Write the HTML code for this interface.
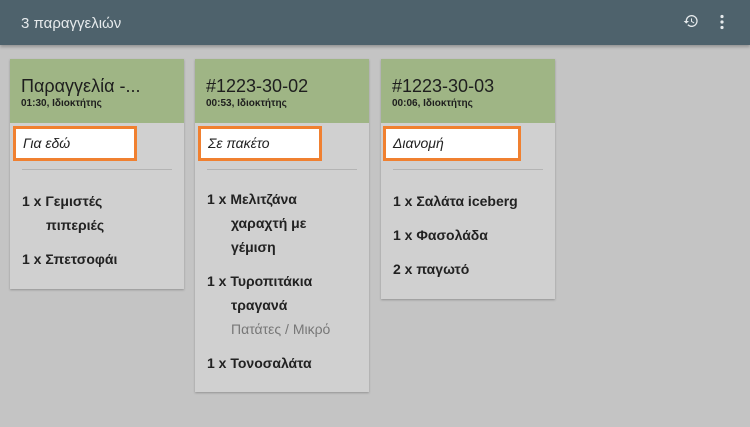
<!DOCTYPE html>
<html><head><meta charset="utf-8"><style>
*{margin:0;padding:0;box-sizing:border-box}
body{width:750px;height:427px;background:#c4c4c4;font-family:"Liberation Sans",Roboto,sans-serif;position:relative;overflow:hidden}
.bar{position:absolute;left:0;top:0;width:750px;height:45px;background:#4e626c;box-shadow:0 2px 3px rgba(0,0,0,.25)}
.bar .t{position:absolute;left:21px;top:15px;color:#e6eaec;font-size:15px}
.card{position:absolute;top:59px;width:174px;background:#d0d0d0;box-shadow:0 1px 2px rgba(0,0,0,.25)}
.hd{height:64px;background:#9fb585;padding:16px 0 0 11px;color:#1e1e1e}
.hd .n{font-size:18px;line-height:22px}
.hd .s{font-size:10px;font-weight:bold;margin-top:1px}
.tp{position:absolute;top:67px;left:3px;width:124px;height:35px;border:3px solid #f08030;background:#fff;font-style:italic;font-size:14px;padding:6px 0 0 7px;color:#222}
.dv{position:absolute;top:110px;left:12px;width:150px;height:1px;background:#b4b4b4}
.lst{position:absolute;top:130px;left:12px;width:125px}
.it{font-size:14px;font-weight:bold;color:#222;line-height:24px;margin-bottom:10px;padding-left:24px;text-indent:-24px}
.it .m{font-weight:normal;color:#777;text-indent:0}
</style></head><body>
<div class="bar"><div class="t">3 παραγγελιών</div>
<svg style="position:absolute;left:683px;top:13px" width="16" height="16" viewBox="0 0 24 24"><path fill="#e6eaec" d="M13 3a9 9 0 0 0-9 9H1l3.9 3.9L9 12H6a7 7 0 1 1 2.05 4.95l-1.42 1.42A9 9 0 1 0 13 3zm-1 5v5l4.25 2.52.77-1.28-3.52-2.09V8z"/></svg>
<svg style="position:absolute;left:719px;top:14px" width="6" height="16" viewBox="0 0 6 16"><circle cx="3" cy="2.5" r="1.6" fill="#e6eaec"/><circle cx="3" cy="8" r="1.6" fill="#e6eaec"/><circle cx="3" cy="13.5" r="1.6" fill="#e6eaec"/></svg>
</div>
<div class="card" style="left:10px;height:230px">
<div class="hd"><div class="n">Παραγγελία -...</div><div class="s">01:30, Ιδιοκτήτης</div></div>
<div class="tp">Για εδώ</div><div class="dv"></div>
<div class="lst" style="top:130px">
<div class="it">1 x Γεμιστές πιπεριές</div><div class="it">1 x Σπετσοφάι</div></div>
</div>
<div class="card" style="left:195px;height:333px">
<div class="hd"><div class="n">#1223-30-02</div><div class="s">00:53, Ιδιοκτήτης</div></div>
<div class="tp">Σε πακέτο</div><div class="dv"></div>
<div class="lst" style="top:128px">
<div class="it">1 x Μελιτζάνα χαραχτή με γέμιση</div><div class="it">1 x Τυροπιτάκια τραγανά<div class="m">Πατάτες / Μικρό</div></div><div class="it">1 x Τονοσαλάτα</div></div>
</div>
<div class="card" style="left:381px;height:240px">
<div class="hd"><div class="n">#1223-30-03</div><div class="s">00:06, Ιδιοκτήτης</div></div>
<div class="tp" style="width:138px;left:2px">Διανομή</div><div class="dv"></div>
<div class="lst" style="width:160px">
<div class="it">1 x Σαλάτα iceberg</div><div class="it">1 x Φασολάδα</div><div class="it">2 x παγωτό</div></div>
</div>
</body></html>
